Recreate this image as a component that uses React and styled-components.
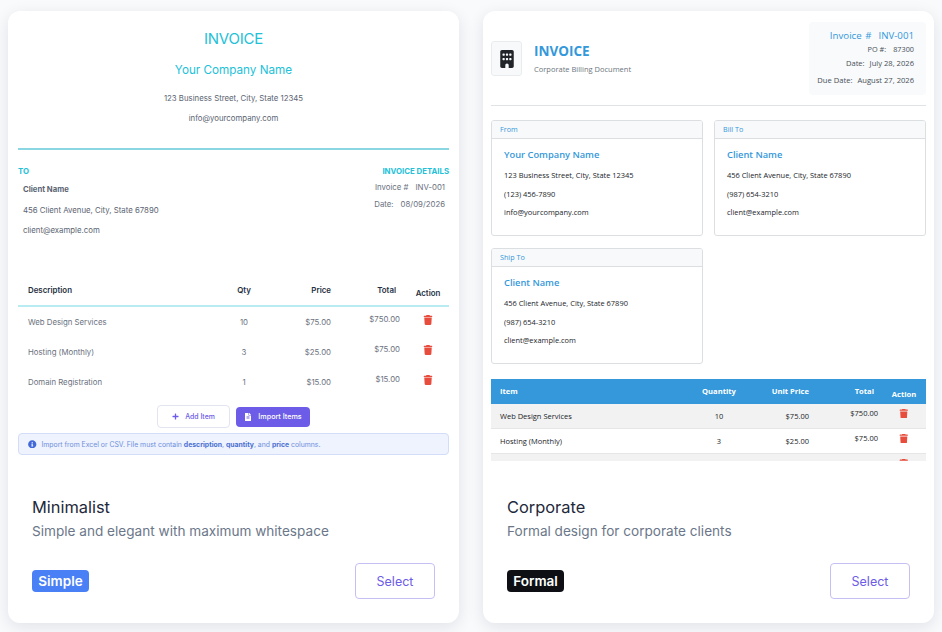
import React from "react";
import styled, { createGlobalStyle } from "styled-components";
import { FaPlus, FaFileAlt, FaInfoCircle } from "react-icons/fa";
import { FaBuilding, FaTrash } from "react-icons/fa6";

const Global = createGlobalStyle`
  html, body { margin: 0; padding: 0; background: #f8fafc; }
  body { font-family: Inter, "Noto Sans", sans-serif; width: 942px; height: 632px; overflow: hidden; }
  * { box-sizing: border-box; }
`;
const Page = styled.div`
  display: grid; grid-template-columns: 451px 451px; gap: 24px; padding: 11px 8px 0;
`;
const Card = styled.div`
  height: 612px; background: #fff; border-radius: 12px;
  box-shadow: 0 4px 16px rgba(15, 23, 42, 0.1); overflow: hidden;
  display: flex; flex-direction: column;
`;
const Preview = styled.div`
  height: 450px; overflow: hidden; padding: ${p => p.$pad};
`;
const Footer = styled.div`
  padding: 36px 24px 24px; flex: 1; display: flex; flex-direction: column;
`;
const TemplateName = styled.div`
  font-size: 16.4px; line-height: 20px; font-weight: 400; color: #1e293b;
`;
const TemplateDesc = styled.div`
  font-size: 13.6px; line-height: 20px; margin-top: 4px; color: #6b7789;
`;
const FooterRow = styled.div`
  margin-top: 22px; display: flex; align-items: center; justify-content: space-between;
`;
const Badge = styled.span`
  height: 22px; width: 57px; border-radius: 4px; background: ${p => p.$bg}; color: #fff;
  font-size: 13.5px; font-weight: 600; display: flex; align-items: center; justify-content: center;
`;
const SelectButton = styled.button`
  width: 80px; height: 36px; border: 1px solid #c4c0f4; border-radius: 4px; background: #fff;
  color: #6c5ce7; font: 400 12.5px Inter, sans-serif;
`;

/* minimalist */
const MinHeader = styled.div`
  text-align: center; height: 129px; border-bottom: 2px solid #8ad6e2; padding-top: 8px;
`;
const MinTitle = styled.div`font-size: 15px; line-height: 20px; color: #22c1d8; letter-spacing: -0.2px;`;
const MinCompany = styled.div`font-size: 11.7px; line-height: 16px; margin-top: 13px; color: #22c1d8;`;
const MinAddr = styled.div`font-size: 7.8px; line-height: 12px; color: #5b6472; margin-top: ${p => p.$mt};`;
const MinParties = styled.div`
  display: flex; justify-content: space-between; height: 131px; padding-top: 15px;
`;
const SectionLabel = styled.div`
  font-size: 7.8px; line-height: 12px; font-weight: 700; color: #22c1d8;
`;
const ClientBlock = styled.div`padding-left: 5px; margin-top: 7px;`;
const ClientName = styled.div`font-size: 7.7px; line-height: 12px; font-weight: 700; color: #5b6472;`;
const DetailBlock = styled.div`display: flex; flex-direction: column; align-items: flex-end;`;
const DetailRow = styled.div`
  font-size: 7.8px; line-height: 12px; color: #6b7280; margin-top: ${p => p.$mt}; padding-right: 4px;
  display: flex; gap: 7px;
`;
const Row = styled.div`
  display: grid; align-items: center; height: ${p => p.$h}px;
  grid-template-columns: ${p => p.$cols};
  padding: ${p => p.$pad};
  background: ${p => p.$bg || "transparent"};
  border-bottom: ${p => p.$line || "0"};
  color: ${p => p.$color};
  font-size: ${p => p.$size}px;
  font-weight: ${p => p.$weight || 400};
`;
const Cell = styled.div`
  text-align: ${p => p.$align || "left"};
  white-space: nowrap;
`;
const RaisedCell = styled(Cell)`padding-bottom: 6px;`;
const TotalHead = styled(Cell)`padding-right: 4px; text-align: right;`;
const ActionHead = styled(Cell)`padding: 6px 0 0 ${p => p.$left}px; text-align: center;`;
const TrashCell = styled.div`
  display: flex; justify-content: center; padding: 0 0 5px ${p => p.$left}px; color: #e74c3c; font-size: ${p => p.$size}px;
`;
const Buttons = styled.div`display: flex; justify-content: center; gap: 6px; margin-top: 8px; align-items: center;`;
const AddButton = styled.button`
  width: 73px; height: 23px; border: 1px solid #e2e4f0; border-radius: 4px; background: #fff;
  color: #6c5ce7; font: 500 6.9px Inter, sans-serif; display: flex; align-items: center; justify-content: center; gap: 6px; padding: 0;
`;
const ImportButton = styled(AddButton)`
  width: 74px; height: 20px; border: 0; background: #6c5ce7; color: #fff; border-radius: 4px; font-size: 7.2px;
`;
const InfoBar = styled.div`
  margin-top: 5px; height: 22px; border: 1px solid #d3dcf8; border-radius: 4px; background: #eef3fe;
  color: #6f8fdc; font-size: 6.87px; display: flex; align-items: center; gap: 5px; padding-left: 9px;
  white-space: pre;
  svg { color: #4169d8; font-size: 8.5px; }
  b { color: #4a6fd0; font-weight: 700; }
`;

/* corporate */
const Corp = styled.div`font-family: "Open Sans", sans-serif;`;
const CorpHeader = styled.div`
  display: flex; align-items: center; height: 84px; border-bottom: 1px solid #dfe3e6; padding-bottom: 10px;
`;
const LogoBox = styled.div`
  width: 31px; height: 35px; border: 1px solid #e9ecef; border-radius: 3px; background: #f8f9fa;
  display: flex; align-items: center; justify-content: center; color: #212529; font-size: 18px;
`;
const CorpTitleBlock = styled.div`margin: 0 0 2px 12px; flex: 1;`;
const CorpTitle = styled.div`font-size: 13.5px; line-height: 18px; font-weight: 700; color: #3498db;`;
const CorpSub = styled.div`font-size: 7.5px; line-height: 10px; margin-top: 4px; color: #6c757d;`;
const InfoBox = styled.div`
  width: 117px; height: 73px; background: #f8fafc; border-radius: 4px; padding: 7px 12px 0 0;
  display: flex; flex-direction: column; align-items: flex-end; color: #495057; font-size: 7.6px;
`;
const InvoiceNo = styled.div`font-size: 9.7px; line-height: 14px; font-weight: 500; color: #3498db; word-spacing: 1px;`;
const InfoLine = styled.div`
  line-height: 10px; margin-top: ${p => p.$mt}px; font-size: ${p => p.$size || 7.6}px; display: flex; gap: ${p => p.$gap || 5}px;
`;
const Parties = styled.div`
  display: grid; grid-template-columns: 212px 212px; gap: 12px 11px; margin-top: 14px;
`;
const Party = styled.div`
  height: 116px; border: 1px solid #dcdfe2; border-radius: 3px; overflow: hidden;
`;
const PartyHead = styled.div`
  height: 18px; background: #f8f9fa; border-bottom: 1px solid #dcdfe2; color: #3498db;
  font-size: 7.2px; line-height: 17px; padding-left: 8px; font-weight: 500;
`;
const PartyBody = styled.div`padding: 9px 12px;`;
const PartyName = styled.div`font-size: 9.3px; line-height: 14px; font-weight: 600; color: #3498db;`;
const PartyLine = styled.div`font-size: 7.45px; line-height: 11px; color: #212529; margin-top: ${p => p.$mt}px;`;
const CorpTable = styled.div`margin-top: 15px;`;

const CellH = ({ children, align }) => <Cell $align={align}>{children}</Cell>;

const minCols = "190px 52px 61px 69px 46px";
const corpCols = "186px 66px 57px 69px 48px";

function PartyCard({ label, name, addr, phone, mail }) {
  return (
    <Party>
      <PartyHead>{label}</PartyHead>
      <PartyBody>
        <PartyName>{name}</PartyName>
        <PartyLine $mt={8}>{addr}</PartyLine>
        <PartyLine $mt={7.5}>{phone}</PartyLine>
        <PartyLine $mt={7.5}>{mail}</PartyLine>
      </PartyBody>
    </Party>
  );
}

const minRows = [
  ["Web Design Services", "10", "$75.00", "$750.00"],
  ["Hosting (Monthly)", "3", "$25.00", "$75.00"],
  ["Domain Registration", "1", "$15.00", "$15.00"],
];

function Minimalist() {
  return (
    <Preview $pad="10px 10px 0">
      <MinHeader>
        <MinTitle>INVOICE</MinTitle>
        <MinCompany>Your Company Name</MinCompany>
        <MinAddr $mt="14px">123 Business Street, City, State 12345</MinAddr>
        <MinAddr $mt="8px">info@yourcompany.com</MinAddr>
      </MinHeader>
      <MinParties>
        <div>
          <SectionLabel>TO</SectionLabel>
          <ClientBlock>
            <ClientName>Client Name</ClientName>
            <MinAddr $mt="8px">456 Client Avenue, City, State 67890</MinAddr>
            <MinAddr $mt="8px">client@example.com</MinAddr>
          </ClientBlock>
        </div>
        <DetailBlock>
          <SectionLabel>INVOICE DETAILS</SectionLabel>
          <DetailRow $mt="4px"><span>Invoice #</span><span>INV-001</span></DetailRow>
          <DetailRow $mt="5px"><span>Date:</span><span>08/09/2026</span></DetailRow>
        </DetailBlock>
      </MinParties>
      <Row $h={26} $cols={minCols} $pad="0 4px 6px 10px" $line="2px solid #b8ecf2" $color="#27303f" $size={7.9} $weight={600}>
        <CellH>Description</CellH>
        <CellH align="center">Qty</CellH>
        <CellH align="right">Price</CellH>
        <TotalHead>Total</TotalHead>
        <ActionHead $left={10}>Action</ActionHead>
      </Row>
      {minRows.map(r => (
        <Row key={r[0]} $h={30} $cols={minCols} $pad="0 4px 0 10px" $color="#6b7280" $size={7.8}>
          <CellH>{r[0]}</CellH>
          <CellH align="center">{r[1]}</CellH>
          <CellH align="right">{r[2]}</CellH>
          <RaisedCell $align="right">{r[3]}</RaisedCell>
          <TrashCell $size={10} $left={10}><FaTrash /></TrashCell>
        </Row>
      ))}
      <Buttons>
        <AddButton><FaPlus size={7} />Add Item</AddButton>
        <ImportButton><FaFileAlt size={8} />Import Items</ImportButton>
      </Buttons>
      <InfoBar>
        <FaInfoCircle />
        <span>Import from Excel or CSV. File must contain <b>description</b>, <b>quantity</b>, and <b>price</b> columns.</span>
      </InfoBar>
    </Preview>
  );
}

const corpRows = [
  ["Web Design Services", "10", "$75.00", "$750.00", "#f2f2f2"],
  ["Hosting (Monthly)", "3", "$25.00", "$75.00", "#fff"],
  ["Domain Registration", "1", "$15.00", "$15.00", "#f2f2f2"],
];

function Corporate() {
  return (
    <Preview $pad="11px 8px 0">
      <Corp>
        <CorpHeader>
          <LogoBox><FaBuilding /></LogoBox>
          <CorpTitleBlock>
            <CorpTitle>INVOICE</CorpTitle>
            <CorpSub>Corporate Billing Document</CorpSub>
          </CorpTitleBlock>
          <InfoBox>
            <InvoiceNo>Invoice # &nbsp;INV-001</InvoiceNo>
            <InfoLine $mt={1} $size={7.3} $gap={7}><span>PO #:</span><span>87300</span></InfoLine>
            <InfoLine $mt={4}><span>Date:</span><span>July 28, 2026</span></InfoLine>
            <InfoLine $mt={7}><span>Due Date:</span><span>August 27, 2026</span></InfoLine>
          </InfoBox>
        </CorpHeader>
        <Parties>
          <PartyCard label="From" name="Your Company Name" addr="123 Business Street, City, State 12345" phone="(123) 456-7890" mail="info@yourcompany.com" />
          <PartyCard label="Bill To" name="Client Name" addr="456 Client Avenue, City, State 67890" phone="(987) 654-3210" mail="client@example.com" />
          <PartyCard label="Ship To" name="Client Name" addr="456 Client Avenue, City, State 67890" phone="(987) 654-3210" mail="client@example.com" />
        </Parties>
        <CorpTable>
          <Row $h={25} $cols={corpCols} $pad="0 0 2px 9px" $bg="#3498db" $color="#fff" $size={7.6} $weight={700}>
            <CellH>Item</CellH>
            <CellH align="center">Quantity</CellH>
            <CellH align="right">Unit Price</CellH>
            <TotalHead>Total</TotalHead>
            <ActionHead $left={4}>Action</ActionHead>
          </Row>
          {corpRows.map(r => (
            <Row key={r[0]} $h={25} $cols={corpCols} $pad="0 0 0 9px" $bg={r[4]} $line="1px solid #e4e6e8" $color="#212529" $size={7.5}>
              <CellH>{r[0]}</CellH>
              <CellH align="center">{r[1]}</CellH>
              <CellH align="right">{r[2]}</CellH>
              <RaisedCell $align="right">{r[3]}</RaisedCell>
              <TrashCell $size={9.5} $left={4}><FaTrash /></TrashCell>
            </Row>
          ))}
        </CorpTable>
      </Corp>
    </Preview>
  );
}

function TemplateCard({ children, name, desc, badge, bg }) {
  return (
    <Card>
      {children}
      <Footer>
        <TemplateName>{name}</TemplateName>
        <TemplateDesc>{desc}</TemplateDesc>
        <FooterRow>
          <Badge $bg={bg}>{badge}</Badge>
          <SelectButton>Select</SelectButton>
        </FooterRow>
      </Footer>
    </Card>
  );
}

export default function App() {
  return (
    <>
      <Global />
      <Page>
        <TemplateCard name="Minimalist" desc="Simple and elegant with maximum whitespace" badge="Simple" bg="#4a80f5">
          <Minimalist />
        </TemplateCard>
        <TemplateCard name="Corporate" desc="Formal design for corporate clients" badge="Formal" bg="#0d0f14">
          <Corporate />
        </TemplateCard>
      </Page>
    </>
  );
}
